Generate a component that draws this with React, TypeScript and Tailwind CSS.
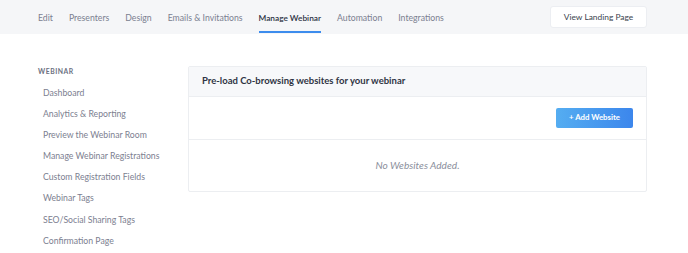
import { useState } from 'react';

const tabs = ['Edit', 'Presenters', 'Design', 'Emails & Invitations', 'Manage Webinar', 'Automation', 'Integrations'];

const sideLinks = [
  'Dashboard',
  'Analytics & Reporting',
  'Preview the Webinar Room',
  'Manage Webinar Registrations',
  'Custom Registration Fields',
  'Webinar Tags',
  'SEO/Social Sharing Tags',
  'Confirmation Page',
];

export default function App() {
  const [active, setActive] = useState('Manage Webinar');

  return (
    <div className="w-[688px] h-[253px] bg-white overflow-hidden" style={{ fontFamily: 'Lato, "Noto Sans", sans-serif' }}>
      {/* top tabs */}
      <div className="h-[34px] bg-[#f5f6f8] flex items-stretch pl-[38px] pr-[41px]">
        <nav className="flex items-stretch gap-[16px]">
          {tabs.map((tab) => (
            <button
              key={tab}
              onClick={() => setActive(tab)}
              className={`relative pt-[2px] ${
                active === tab ? 'text-[8.3px] text-[#2d3344] font-semibold' : 'text-[8.7px] text-[#7b8090]'
              }`}
            >
              {tab}
              {active === tab && <span className="absolute left-0 right-0 bottom-[1px] h-[2px] bg-[#3d8ced]" />}
            </button>
          ))}
        </nav>
        <div className="ml-auto flex items-center">
          <button className="w-[97px] h-[22px] rounded-[3px] bg-white border border-[#eceef2] text-[8.4px] text-[#3a3f4e]">
            View Landing Page
          </button>
        </div>
      </div>

      <div className="flex items-start pl-[38px] pt-[32px] pr-[41px]">
        {/* sidebar */}
        <aside className="w-[150px] shrink-0">
          <p className="text-[6.8px] leading-[10px] font-bold tracking-[0.08em] text-[#6b7080]">WEBINAR</p>
          <ul className="mt-[6px] pl-[5px] flex flex-col">
            {sideLinks.map((link) => (
              <li key={link} className="text-[8.7px] leading-[21.1px] text-[#7c8090]">
                {link}
              </li>
            ))}
          </ul>
        </aside>

        {/* panel */}
        <section className="flex-1 border border-[#eceef1] rounded-[2px]">
          <div className="h-[30px] bg-[#f7f8fa] border-b border-[#eceef1] flex items-center px-[13px]">
            <h2 className="text-[9.5px] font-bold text-[#2f3444]">Pre-load Co-browsing websites for your webinar</h2>
          </div>
          <div className="h-[43px] border-b border-[#eceef1] flex items-center justify-end px-[13px]">
            <button className="w-[77px] h-[20px] rounded-[2px] bg-gradient-to-r from-[#55adf1] to-[#3c86ec] text-white text-[7.8px] font-bold">
              + Add Website
            </button>
          </div>
          <div className="h-[51px] flex items-center justify-center">
            <p className="text-[10.1px] italic text-[#8a8e9b]">No Websites Added.</p>
          </div>
        </section>
      </div>
    </div>
  );
}
